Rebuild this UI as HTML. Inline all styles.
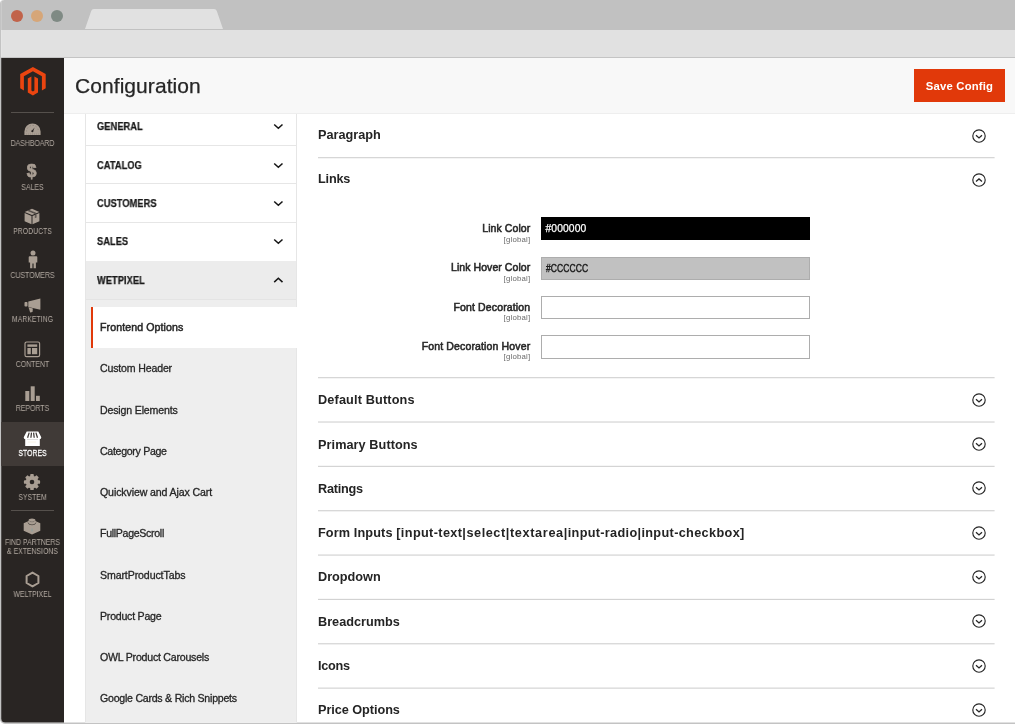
<!DOCTYPE html>
<html lang="en">
<head>
<meta charset="utf-8">
<title>Configuration</title>
<style>
*{box-sizing:border-box;margin:0;padding:0}
html,body{width:1015px;height:724px;overflow:hidden;background:#fff}
body{font-family:"Liberation Sans","DejaVu Sans",sans-serif;color:#303030;position:relative}
.abs{position:absolute}
.mi,.mi2,.sub,.sec,.lbl,.glb,.ng span,#title,#save,.inp{will-change:transform}
#frame{position:absolute;left:0;top:0;width:1015px;height:724px;overflow:hidden;border-radius:4px 0 0 5px;background:#c3c3c3}
#inner{position:absolute;left:0;top:0;width:1015px;height:724px;background:#fff;clip-path:inset(0 0 1.4px 1.2px round 3px 0 0 4px)}
#topbar{position:absolute;left:0;top:0;width:1015px;height:30px;background:#c1c1c1}
#toolbar{position:absolute;left:0;top:30px;width:1015px;height:28px;background:#e1e1e1;border-bottom:1px solid #c4c4c4}
.dot{position:absolute;top:10px;width:12px;height:12px;border-radius:50%}
#side{position:absolute;left:0;top:58px;width:64px;height:666px;background:#292523}
#head{position:absolute;left:64px;top:58px;width:951px;height:56px;background:#f8f8f8;border-bottom:1px solid #eeeeee}
#title{position:absolute;left:75px;top:72px;font-size:21px;line-height:28px;color:#262626;white-space:nowrap;letter-spacing:.07px;-webkit-text-stroke:.25px #262626}
#save{position:absolute;left:914px;top:69px;width:91px;height:33px;background:#e1390a;color:#fff;font-weight:bold;font-size:11.3px;line-height:34px;text-align:center;white-space:nowrap;letter-spacing:.19px}
.mi{position:absolute;left:-19px;width:103px;text-align:center;color:#b3aaa2;font-size:8.3px;line-height:9px;white-space:nowrap;letter-spacing:0;transform:scaleX(.832)}
.mi svg{display:block;margin:0 auto}
#nav{position:absolute;left:85px;top:114px;width:212px;height:610px;border-left:1px solid #e6e6e6;border-right:1px solid #e6e6e6;background:#fff}
.ng{position:absolute;left:0;width:210px;border-bottom:1px solid #e6e6e6;font-weight:bold;font-size:10.2px;color:#1a1a1a;-webkit-text-stroke:.25px #1a1a1a;white-space:nowrap;letter-spacing:.1px}
.ng span{position:absolute;left:11px;transform:scaleX(.905);transform-origin:0 50%}
.ng svg{position:absolute;left:187px;overflow:visible}
.sub{position:absolute;left:100.4px;font-size:10.6px;line-height:14px;color:#262626;-webkit-text-stroke:.3px #262626;white-space:nowrap;letter-spacing:-.17px}
.sec{position:absolute;left:318px;font-size:12.7px;line-height:16px;font-weight:bold;color:#242424;white-space:nowrap;letter-spacing:0}
.hr{position:absolute;left:318px;width:677px;height:1px;background:#cfcfcf}
.ci{position:absolute;left:971.6px;overflow:visible;width:14px;height:14px}
.lbl{position:absolute;width:230.3px;left:300px;text-align:right;font-size:10.5px;line-height:13px;font-weight:normal;-webkit-text-stroke:.55px #282828;letter-spacing:.07px;color:#282828;white-space:nowrap}
.glb{position:absolute;width:230.3px;left:300px;text-align:right;font-size:7.8px;line-height:9px;color:#6a6a6a;white-space:nowrap;letter-spacing:.2px}
.inp{position:absolute;left:541px;width:269px;height:23px;border:1px solid #adadad;background:#fff;font-size:10.3px;line-height:21px;padding-left:3.5px;color:#222;letter-spacing:.1px;-webkit-text-stroke:.25px;white-space:nowrap}
.inp span{display:inline-block;transform:scaleX(.825);transform-origin:0 50%}
</style>
</head>
<body>
<div id="frame">
<div id="inner">
<div id="topbar"></div>
<div id="toolbar"></div>
<svg class="abs" style="left:80px;top:8px" width="150" height="23" viewBox="0 0 150 23"><path d="M5 21 L11.2 3 Q11.8 1 14 1 L134 1 Q136.2 1 136.8 3 L143 21 Z" fill="#e1e1e1"/></svg>
<div class="dot" style="left:11px;background:#c1634a"></div>
<div class="dot" style="left:31px;background:#d6a678"></div>
<div class="dot" style="left:51px;background:#7f8a84"></div>

<div id="side"></div>
<div id="head"></div>
<div id="title">Configuration</div>
<div id="save">Save Config</div>

<!-- sidebar menu -->
<svg class="abs" style="left:20px;top:66px" width="26" height="30" viewBox="0 0 26 30"><path d="M12.9 .9 L25.7 8.1 V22.2 L21.9 24.4 V10.2 L12.9 5.2 L3.9 10.2 V24.4 L.2 22.2 V8.1 Z M7.8 12.5 L11.4 10.5 V24.6 L12.9 25.4 L14.4 24.6 V10.5 L18 12.5 V26.5 L12.9 29.4 L7.8 26.5 Z" fill="#eb4510"/></svg>
<div class="abs" style="left:11px;top:112px;width:43px;height:1px;background:#55504c"></div>

<svg class="abs" style="left:24px;top:123px" width="17" height="13" viewBox="0 0 17 13"><path d="M0.4 12 V8.6 A8.1 8.1 0 0 1 16.6 8.6 V12 Z" fill="#a99e93"/><path d="M7.6 8 L10.6 4.4 L9 8.8 Z" fill="#292523"/><circle cx="8.3" cy="8.3" r="1" fill="#292523"/><path d="M2.6 8.3 A5.9 5.9 0 0 1 14.4 8.3" stroke="#292523" stroke-width=".7" fill="none" stroke-dasharray=".7 2.4" opacity=".55"/><path d="M2 11 H15" stroke="#292523" stroke-width=".5" stroke-dasharray=".8 1.2" opacity=".35"/></svg>
<div class="mi" style="top:139px">DASHBOARD</div>
<div class="abs mi2" style="left:.4px;top:160px;width:63px;text-align:center;font-weight:bold;font-size:17.5px;line-height:22px;color:#a99e93;-webkit-text-stroke:.7px #a99e93">$</div>
<div class="mi" style="top:183px">SALES</div>
<svg class="abs" style="left:24px;top:208px" width="16" height="17" viewBox="0 0 16 17"><path d="M8 .8 L15.3 3.9 L8 7 L.7 3.9 Z" fill="#a99e93"/><path d="M.6 5 L7.5 8 V16.3 L.6 13.2 Z" fill="#a99e93"/><path d="M15.4 5 L8.5 8 V16.3 L15.4 13.2 Z" fill="#a99e93"/><path d="M3.8 2.6 L11.4 5.7 M4.6 2.2 L12.2 5.3" stroke="#292523" stroke-width=".6"/><path d="M10.8 7.2 V10.2 L12.6 9.4 V6.4 Z" fill="#292523" opacity=".55"/></svg>
<div class="mi" style="top:227px">PRODUCTS</div>
<svg class="abs" style="left:28px;top:250px" width="10" height="19" viewBox="0 0 10 19"><circle cx="5" cy="3" r="2.5" fill="#a99e93"/><path d="M1.6 6.2 H8.4 Q9.3 6.2 9.3 7.2 V12.6 H7.9 V18.2 H5.6 V13.4 H4.4 V18.2 H2.1 V12.6 H.7 V7.2 Q.7 6.2 1.6 6.2 Z" fill="#a99e93"/></svg>
<div class="mi" style="top:271px">CUSTOMERS</div>
<svg class="abs" style="left:24px;top:297px" width="17" height="16" viewBox="0 0 17 16"><path d="M4.3 4.6 L16.4 1.6 V12.8 L4.3 9.9 Z" fill="#a99e93"/><rect x=".5" y="5.1" width="3" height="4.4" rx=".8" fill="#a99e93"/><path d="M4.5 10.3 L8.9 11.4 L8.5 15 L6.2 15.5 Z" fill="#a99e93"/></svg>
<div class="mi" style="top:315px">MARKETING</div>
<svg class="abs" style="left:24px;top:341px" width="17" height="17" viewBox="0 0 17 17"><rect x="1" y="1" width="14.6" height="14.6" rx="1.6" fill="none" stroke="#a99e93" stroke-width="1.2"/><rect x="3.4" y="3.4" width="9.8" height="2.4" fill="#a99e93"/><rect x="3.4" y="7" width="3.4" height="6.2" fill="#a99e93"/><rect x="8" y="7" width="5.2" height="6.2" fill="#a99e93"/></svg>
<div class="mi" style="top:360px">CONTENT</div>
<svg class="abs" style="left:25px;top:386px" width="16" height="16" viewBox="0 0 16 16"><rect x=".3" y="5" width="4" height="10" fill="#a99e93"/><rect x="5.7" y=".3" width="4" height="14.7" fill="#a99e93"/><rect x="11" y="9.8" width="3.8" height="5.2" fill="#a99e93"/></svg>
<div class="mi" style="top:404px">REPORTS</div>
<div class="abs" style="left:1px;top:422px;width:63px;height:44px;background:#403a37"></div>
<svg class="abs" style="left:23px;top:431px" width="19" height="16" viewBox="0 0 19 16"><path d="M3.7 .5 H15.3 L18.3 6.3 Q18.3 8.3 16.5 8.3 H16.8 V15 H2.2 V8.3 H2.5 Q.7 8.3 .7 6.3 Z" fill="#fff"/><path d="M6.2 1.6 L4.6 6.8 M8.5 1.6 L7.9 6.8 M10.6 1.6 L11.2 6.8 M12.9 1.6 L14.5 6.8" stroke="#403a37" stroke-width="1.25"/><path d="M4 8.6 H15 " stroke="#403a37" stroke-width=".5" opacity=".35"/><path d="M5.5 11 H13.5" stroke="#e9c98c" stroke-width=".7" stroke-dasharray="1 1" opacity=".6"/></svg>
<div class="mi" style="top:449px;color:#fff;-webkit-text-stroke:.3px #fff">STORES</div>
<svg class="abs" style="left:23px;top:473px" width="18" height="18" viewBox="-9 -9 18 18"><g fill="#a99e93"><circle r="6.3"/><rect x="-1.8" y="-8.1" width="3.6" height="3" rx=".9" transform="rotate(0)"/><rect x="-1.8" y="-8.1" width="3.6" height="3" rx=".9" transform="rotate(45)"/><rect x="-1.8" y="-8.1" width="3.6" height="3" rx=".9" transform="rotate(90)"/><rect x="-1.8" y="-8.1" width="3.6" height="3" rx=".9" transform="rotate(135)"/><rect x="-1.8" y="-8.1" width="3.6" height="3" rx=".9" transform="rotate(180)"/><rect x="-1.8" y="-8.1" width="3.6" height="3" rx=".9" transform="rotate(225)"/><rect x="-1.8" y="-8.1" width="3.6" height="3" rx=".9" transform="rotate(270)"/><rect x="-1.8" y="-8.1" width="3.6" height="3" rx=".9" transform="rotate(315)"/></g><circle r="2.3" fill="#292523"/></svg>
<div class="mi" style="top:493px">SYSTEM</div>
<div class="abs" style="left:11px;top:510px;width:43px;height:1px;background:#55504c"></div>
<svg class="abs" style="left:23px;top:518px" width="18" height="17" viewBox="0 0 18 17"><path d="M9 1.6 L17.3 5.3 V12.7 L9 16.6 L.7 12.7 V5.3 Z" fill="#a99e93"/><path d="M5.6 2.4 Q5.6 .6 9 .6 Q12.4 .6 12.4 2.4 V4.4 Q12.4 6 9 6 Q5.6 6 5.6 4.4 Z" fill="#a99e93"/><path d="M5 4.5 Q5 6.8 9 6.8 Q13 6.8 13 4.5" fill="none" stroke="#292523" stroke-width=".7" opacity=".8"/><path d="M6.3 2.6 Q6.3 3.9 9 3.9 Q11.7 3.9 11.7 2.6" fill="none" stroke="#292523" stroke-width=".5" opacity=".55"/><path d="M9 10.5 V13.5" stroke="#6fa3a8" stroke-width=".8" opacity=".7"/></svg>
<div class="mi" style="top:538px">FIND PARTNERS<br>&amp; EXTENSIONS</div>
<svg class="abs" style="left:25px;top:571px" width="15" height="17" viewBox="0 0 15 17"><path d="M7.5 1.6 L13.4 5 V12 L7.5 15.4 L1.6 12 V5 Z" fill="none" stroke="#a99e93" stroke-width="2" stroke-linejoin="round"/></svg>
<div class="mi" style="top:590px">WELTPIXEL</div>

<!-- config nav -->
<div id="nav">
  <div class="ng" style="top:0;height:32px"><span style="top:7px">GENERAL</span><svg style="top:9px" width="10" height="7" viewBox="0 0 10 7"><path d="M1.2 1.5 L5.35 5.3 L9.5 1.5" fill="none" stroke="#161616" stroke-width="1.55"/></svg></div>
  <div class="ng" style="top:32px;height:38px"><span style="top:14px">CATALOG</span><svg style="top:16px" width="10" height="7" viewBox="0 0 10 7"><path d="M1.2 1.5 L5.35 5.3 L9.5 1.5" fill="none" stroke="#161616" stroke-width="1.55"/></svg></div>
  <div class="ng" style="top:70px;height:39px"><span style="top:14px">CUSTOMERS</span><svg style="top:16px" width="10" height="7" viewBox="0 0 10 7"><path d="M1.2 1.5 L5.35 5.3 L9.5 1.5" fill="none" stroke="#161616" stroke-width="1.55"/></svg></div>
  <div class="ng" style="top:109px;height:38px;border-bottom:0"><span style="top:13px">SALES</span><svg style="top:15px" width="10" height="7" viewBox="0 0 10 7"><path d="M1.2 1.5 L5.35 5.3 L9.5 1.5" fill="none" stroke="#161616" stroke-width="1.55"/></svg></div>
  <div class="ng" style="top:147px;height:39px;background:#ececec;border-bottom:1px solid #e4e4e4"><span style="top:14px">WETPIXEL</span><svg style="top:15px" width="10" height="7" viewBox="0 0 10 7"><path d="M1.2 6.1 L5.35 2.3 L9.5 6.1" fill="none" stroke="#161616" stroke-width="1.55"/></svg></div>
  <div class="abs" style="left:0;top:186px;width:210px;height:424px;background:#eeeeee"></div>
</div>
<div class="abs" style="left:91px;top:307px;width:206px;height:41px;background:#fff;border-left:2px solid #e1390a"></div>
<div class="sub" style="top:320px;-webkit-text-stroke:.5px #2a2a2a;letter-spacing:.1px">Frontend Options</div>
<div class="sub" style="top:361px">Custom Header</div>
<div class="sub" style="top:403px">Design Elements</div>
<div class="sub" style="top:444px;letter-spacing:-0.310px">Category Page</div>
<div class="sub" style="top:485px;letter-spacing:-0.120px">Quickview and Ajax Cart</div>
<div class="sub" style="top:526px;letter-spacing:-0.310px">FullPageScroll</div>
<div class="sub" style="top:568px;letter-spacing:-0.110px">SmartProductTabs</div>
<div class="sub" style="top:609px;letter-spacing:-0.230px">Product Page</div>
<div class="sub" style="top:650px;letter-spacing:-0.230px">OWL Product Carousels</div>
<div class="sub" style="top:691px;letter-spacing:-0.245px">Google Cards &amp; Rich Snippets</div>

<!-- main sections -->
<svg class="abs" style="left:318px;top:0" width="677" height="724"><rect x="0" y="157.10" width="676.6" height="1.15" fill="#d2d2d2"/><rect x="0" y="377.10" width="676.6" height="1.15" fill="#d2d2d2"/><rect x="0" y="421.45" width="676.6" height="1.15" fill="#d2d2d2"/><rect x="0" y="465.80" width="676.6" height="1.15" fill="#d2d2d2"/><rect x="0" y="510.15" width="676.6" height="1.15" fill="#d2d2d2"/><rect x="0" y="554.50" width="676.6" height="1.15" fill="#d2d2d2"/><rect x="0" y="598.85" width="676.6" height="1.15" fill="#d2d2d2"/><rect x="0" y="643.20" width="676.6" height="1.15" fill="#d2d2d2"/><rect x="0" y="687.55" width="676.6" height="1.15" fill="#d2d2d2"/></svg>

<div class="sec" style="top:127px">Paragraph</div>
<div class="sec" style="top:171px;letter-spacing:-0.20px">Links</div>

<div class="lbl" style="top:222px">Link Color</div><div class="glb" style="top:235px">[global]</div>
<div class="inp" style="top:217px;background:#000;color:#fff;border-color:#000">#000000</div>
<div class="lbl" style="top:261px">Link Hover Color</div><div class="glb" style="top:274px">[global]</div>
<div class="inp" style="top:257px;background:#c1c1c1;color:#1a1a1a;-webkit-text-stroke:.4px"><span>#CCCCCC</span></div>
<div class="lbl" style="top:301px;letter-spacing:.14px">Font Decoration</div><div class="glb" style="top:313px">[global]</div>
<div class="inp" style="top:296px"></div>
<div class="lbl" style="top:340px;letter-spacing:.14px">Font Decoration Hover</div><div class="glb" style="top:352px">[global]</div>
<div class="inp" style="top:335px;height:24px"></div>

<div class="sec" style="top:392px;letter-spacing:0.15px">Default Buttons</div>
<div class="sec" style="top:437px;letter-spacing:0.07px">Primary Buttons</div>
<div class="sec" style="top:481px;letter-spacing:-0.25px">Ratings</div>
<div class="sec" style="top:525px;letter-spacing:.37px"><span style="letter-spacing:.12px">Form Inputs </span>[input-text<span style="letter-spacing:.54px">|select</span><span style="letter-spacing:.66px">|textarea</span><span style="letter-spacing:.32px">|input-radio</span><span style="letter-spacing:.35px">|input-checkbox]</span></div>
<div class="sec" style="top:569px">Dropdown</div>
<div class="sec" style="top:614px">Breadcrumbs</div>
<div class="sec" style="top:658px;letter-spacing:-0.28px">Icons</div>
<div class="sec" style="top:702px;letter-spacing:-0.05px">Price Options</div>

<svg class="ci" style="top:128.7px" viewBox="0 0 14 14"><circle cx="7" cy="7" r="6.2" fill="none" stroke="#262626" stroke-width="1.15"/><path d="M4 6.2 L7 8.9 L10 6.2" fill="none" stroke="#262626" stroke-width="1.3"/></svg>
<svg class="ci" style="top:172.8px" viewBox="0 0 14 14"><circle cx="7" cy="7" r="6.2" fill="none" stroke="#262626" stroke-width="1.15"/><path d="M4 8.6 L7 5.9 L10 8.6" fill="none" stroke="#262626" stroke-width="1.3"/></svg>
<svg class="ci" style="top:392.6px" viewBox="0 0 14 14"><circle cx="7" cy="7" r="6.2" fill="none" stroke="#262626" stroke-width="1.15"/><path d="M4 6.2 L7 8.9 L10 6.2" fill="none" stroke="#262626" stroke-width="1.3"/></svg>
<svg class="ci" style="top:437.0px" viewBox="0 0 14 14"><circle cx="7" cy="7" r="6.2" fill="none" stroke="#262626" stroke-width="1.15"/><path d="M4 6.2 L7 8.9 L10 6.2" fill="none" stroke="#262626" stroke-width="1.3"/></svg>
<svg class="ci" style="top:481.3px" viewBox="0 0 14 14"><circle cx="7" cy="7" r="6.2" fill="none" stroke="#262626" stroke-width="1.15"/><path d="M4 6.2 L7 8.9 L10 6.2" fill="none" stroke="#262626" stroke-width="1.3"/></svg>
<svg class="ci" style="top:525.6px" viewBox="0 0 14 14"><circle cx="7" cy="7" r="6.2" fill="none" stroke="#262626" stroke-width="1.15"/><path d="M4 6.2 L7 8.9 L10 6.2" fill="none" stroke="#262626" stroke-width="1.3"/></svg>
<svg class="ci" style="top:570.0px" viewBox="0 0 14 14"><circle cx="7" cy="7" r="6.2" fill="none" stroke="#262626" stroke-width="1.15"/><path d="M4 6.2 L7 8.9 L10 6.2" fill="none" stroke="#262626" stroke-width="1.3"/></svg>
<svg class="ci" style="top:614.3px" viewBox="0 0 14 14"><circle cx="7" cy="7" r="6.2" fill="none" stroke="#262626" stroke-width="1.15"/><path d="M4 6.2 L7 8.9 L10 6.2" fill="none" stroke="#262626" stroke-width="1.3"/></svg>
<svg class="ci" style="top:658.7px" viewBox="0 0 14 14"><circle cx="7" cy="7" r="6.2" fill="none" stroke="#262626" stroke-width="1.15"/><path d="M4 6.2 L7 8.9 L10 6.2" fill="none" stroke="#262626" stroke-width="1.3"/></svg>
<svg class="ci" style="top:703.0px" viewBox="0 0 14 14"><circle cx="7" cy="7" r="6.2" fill="none" stroke="#262626" stroke-width="1.15"/><path d="M4 6.2 L7 8.9 L10 6.2" fill="none" stroke="#262626" stroke-width="1.3"/></svg>
</div>
</div>
</body>
</html>
